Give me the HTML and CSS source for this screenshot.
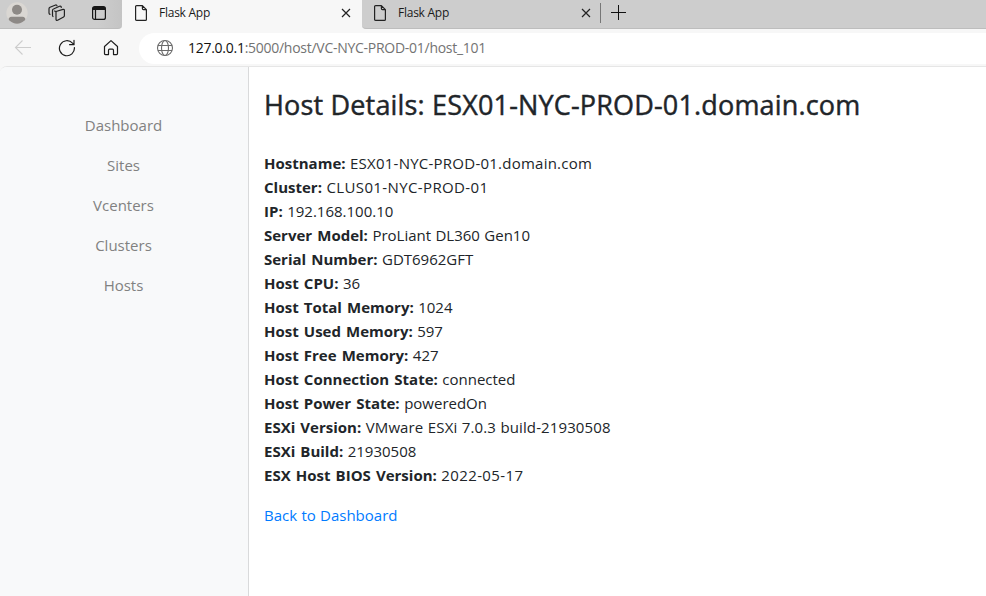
FILE: index.html
```html
<!DOCTYPE html>
<html lang="en">
<head>
<meta charset="utf-8">
<title>Flask App</title>
<link rel="stylesheet" href="styles.css">
</head>
<body>
<div class="tabstrip">
  <div class="window-tools">
    <svg class="avatar" width="24" height="24" viewBox="0 0 24 24"><defs><clipPath id="face"><circle cx="12" cy="12" r="10.7"/></clipPath></defs><circle cx="12" cy="12" r="10.7" fill="#dad7d3"/><g clip-path="url(#face)" fill="#8d8986"><circle cx="12" cy="8.800" r="5"/><path d="M3.500 19c0-2 1-3.300 3-3.300h11c2 0 3 1.300 3 3.300v5h-17z"/></g></svg>
    <svg class="workspaces" width="18" height="18" viewBox="0 0 18 18" fill="none" stroke="#222" stroke-width="1.200" stroke-linejoin="round" stroke-linecap="round"><path d="M8 7.500 15 5.400q1.400-.3 1.400 1v5.200q0 1-.8 1.400l-6 3.200q-1.600.5-1.600-1z"/><path d="M5 12.500q-.5-.3-.5-1.300V6.400q0-1 1-1.400l6-2.700q1.600-.5 1.800 1"/><path d="M2 10.400q-1-.4-1-1.400V4.700q0-1 1-1.500L7 1.200q1.700-.7 2 .7M8 7.500 6.500 7"/></svg>
    <svg class="tab-actions" width="16" height="16" viewBox="0 0 16 16" fill="none" stroke="#161616" stroke-width="1.200"><rect x="1.600" y="1.600" width="12.800" height="12.800" rx="2"/><path d="M2 3.500h12" stroke-width="3"/><path d="M4.500 5v9"/></svg>
  </div>
  <div class="tab tab-active">
    <svg class="page-icon" width="14" height="18" viewBox="0 0 14 18" fill="none" stroke="#222" stroke-width="1.200" stroke-linejoin="round"><path d="M2.600 1.600h5.800l4 4v9.800q0 1-1 1H2.600q-1 0-1-1V2.600q0-1 1-1zM8.400 1.600v3q0 1 1 1h3"/></svg>
    <span class="tab-title">Flask App</span>
    <svg class="close" width="10" height="10" viewBox="0 0 10 10" stroke="#222" stroke-width="1.200"><path d="m1 1 8 8M9 1 1 9"/></svg>
  </div>
  <div class="tab tab-idle">
    <svg class="page-icon" width="14" height="18" viewBox="0 0 14 18" fill="none" stroke="#222" stroke-width="1.200" stroke-linejoin="round"><path d="M2.600 1.600h5.800l4 4v9.800q0 1-1 1H2.600q-1 0-1-1V2.600q0-1 1-1zM8.400 1.600v3q0 1 1 1h3"/></svg>
    <span class="tab-title">Flask App</span>
    <svg class="close" width="10" height="10" viewBox="0 0 10 10" stroke="#222" stroke-width="1.200"><path d="m1 1 8 8M9 1 1 9"/></svg>
  </div>
  <div class="new-tab"><svg width="15" height="15" viewBox="0 0 15 15" stroke="#111" stroke-width="1"><path d="M0 7.500h15M7.500 0v15"/></svg></div>
</div>
<div class="toolbar">
  <svg class="back" width="18" height="16" viewBox="0 0 18 16" fill="none" stroke="#cdcdcd" stroke-width="1.100"><path d="M17 7.500H1.500M8.500 .5l-7 7 7 7"/></svg>
  <svg class="reload" width="18" height="18" viewBox="0 0 18 18" fill="none" stroke="#1c1c1c" stroke-width="1.200" stroke-linecap="round" stroke-linejoin="round"><path d="M16.400 8.500A7.500 7.500 0 1 1 14.500 4.200L16 5.700M16 1.300v4.400h-4.400"/></svg>
  <svg class="home" width="16" height="17" viewBox="0 0 16 17" fill="none" stroke="#1c1c1c" stroke-width="1.200" stroke-linejoin="round"><path d="M1.500 7.500 8 1.600l6.500 5.900v7.100q0 1-1 1H10.500v-4q0-1.500-1-1.500h-3q-1 0-1 1.500v4H2.500q-1 0-1-1z"/></svg>
  <div class="address">
    <svg class="globe" width="18" height="18" viewBox="0 0 18 18" fill="none" stroke="#6c6c6c" stroke-width="1.100"><circle cx="9" cy="9" r="7.500"/><ellipse cx="9" cy="9" rx="3.500" ry="7.500"/><path d="M2 6.500h14M2 11.500h14"/></svg>
    <span class="url"><span class="url-host">127.0.0.1</span>:5000/host/VC-NYC-PROD-01/host_101</span>
  </div>
</div>
<div class="page">
  <nav class="sidebar">
    <a>Dashboard</a><a>Sites</a><a>Vcenters</a><a>Clusters</a><a>Hosts</a>
  </nav>
  <main class="content">
    <h1>Host Details: ESX01-NYC-PROD-01.domain.com</h1>
    <div class="details">
      <div><b>Hostname:</b> <span class="fqdn">ESX01-NYC-PROD-01.domain.com</span></div>
      <div><b>Cluster:</b> <span class="code">CLUS01-NYC-PROD-01</span></div>
      <div><b>IP:</b> <span>192.168.100.10</span></div>
      <div><b>Server Model:</b> <span>ProLiant DL360 Gen10</span></div>
      <div><b>Serial Number:</b> <span>GDT6962GFT</span></div>
      <div><b>Host CPU:</b> <span>36</span></div>
      <div><b>Host Total Memory:</b> <span>1024</span></div>
      <div><b>Host Used Memory:</b> <span>597</span></div>
      <div><b>Host Free Memory:</b> <span>427</span></div>
      <div><b>Host Connection State:</b> <span>connected</span></div>
      <div><b>Host Power State:</b> <span>poweredOn</span></div>
      <div><b>ESXi Version:</b> <span class="version">VMware ESXi 7.0.3 build-21930508</span></div>
      <div><b>ESXi Build:</b> <span>21930508</span></div>
      <div><b>ESX Host BIOS Version:</b> <span class="code">2022-05-17</span></div>
    </div>
    <a class="back-link">Back to Dashboard</a>
  </main>
</div>
</body>
</html>
```
FILE: styles.css
```css
* { box-sizing: border-box; }
body {
  margin: 0;
  height: 596px;
  overflow: hidden;
  display: flex;
  flex-direction: column;
  background: #f7f7f7;
  font-family: "Open Sans", "Noto Sans", sans-serif;
  font-size: 15px;
  color: #212529;
}
svg { display: block; flex: none; }
.tabstrip { display: flex; height: 29px; flex: none; background: #f7f7f7; }
.window-tools {
  width: 122px;
  display: flex;
  align-items: center;
  padding: 0 0 2px 5px;
  background: linear-gradient(90deg, #cdcdcd 80%, #c4c4c4);
  border-bottom: 1px solid #bdbdbd;
  border-bottom-right-radius: 4px;
}
.workspaces { margin-left: 19px; }
.tab-actions { margin-left: 25px; }
.tab { display: flex; align-items: center; padding-bottom: 2px; font-size: 12px; color: #1a1a1a; }
.tab-active { width: 240px; padding-left: 12px; padding-right: 11px; padding-bottom: 3px; }
.tab-idle {
  width: 238px;
  padding-left: 11px;
  padding-right: 9px;
  background: #cdcdcd;
  border-bottom: 1px solid #bdbdbd;
  border-bottom-left-radius: 4px;
}
.tab-title { flex: 1; margin-left: 11px; line-height: 18px; letter-spacing: -0.25px; }
.new-tab { flex: 1; background: #cdcdcd; border-bottom: 1px solid #bdbdbd; padding: 3px 0 0; }
.new-tab svg { box-sizing: content-box; padding: 2px 0 3px 10px; border-left: 1px solid #777; }
.toolbar { display: flex; height: 37px; flex: none; align-items: center; padding-left: 14px; }
.reload { margin-left: 26px; }
.home { margin-left: 27px; }
.address {
  flex: 1;
  height: 31px;
  margin: 1px 0 0 20px;
  display: flex;
  align-items: center;
  padding-left: 17px;
  background: #fff;
  border-radius: 16px 0 0 16px;
}
.url { margin-left: 14px; font-size: 14px; line-height: 18px; color: #737373; letter-spacing: -0.27px; white-space: nowrap; }
.url-host { color: #111; }
.page {
  flex: 1;
  display: flex;
  border-top: 1px solid #e6e6e6;
  border-top-left-radius: 7px;
  overflow: hidden;
  background: #fff;
}
.sidebar {
  width: 249px;
  padding: 38px 1px 0 0;
  border-right: 1px solid #d9dadb;
  background: #f8f9fa;
  display: flex;
  flex-direction: column;
}
.sidebar a { height: 40px; line-height: 40px; text-align: center; color: #818181; }
.content { flex: 1; padding: 19px 0 0 15px; white-space: nowrap; }
h1 {
  margin: 0 0 27px;
  font-size: 27px;
  line-height: 38px;
  font-weight: 500;
  letter-spacing: 0.17px;
  -webkit-text-stroke: 0.45px #212529;
}
.details { line-height: 24px; word-spacing: 0.6px; }
.details b { word-spacing: 1.2px; }
.details span { word-spacing: 0.5px; }
.fqdn { letter-spacing: 0.24px; }
.code { letter-spacing: 0.38px; }
.version { letter-spacing: 0.11px; }
.back-link { display: block; margin-top: 16px; line-height: 24px; color: #007bff; word-spacing: 0.4px; }
```
